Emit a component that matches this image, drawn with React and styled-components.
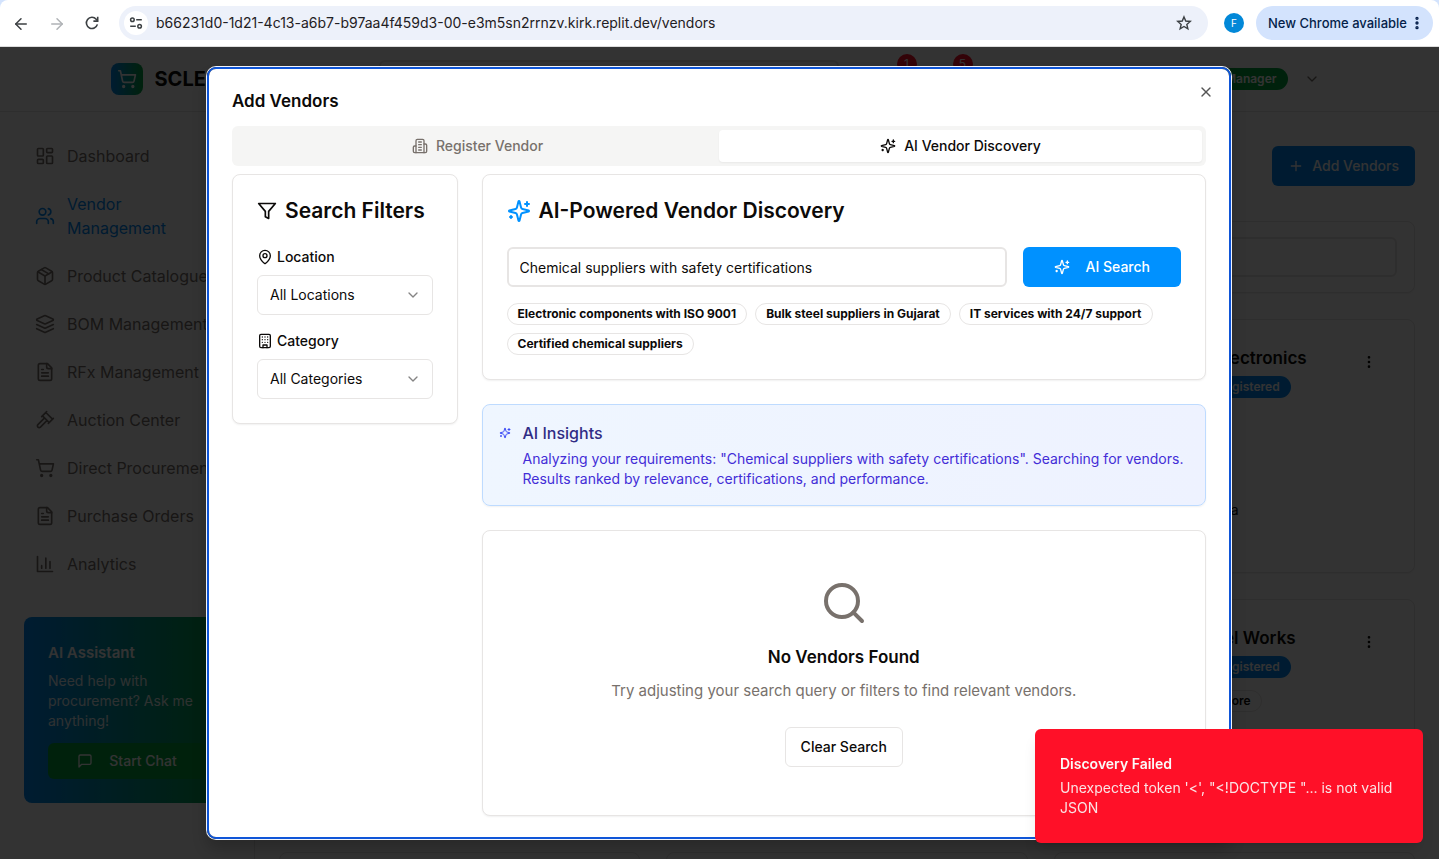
import React from "react";
import styled, { createGlobalStyle, css } from "styled-components";
import {
  ArrowLeft,
  ArrowRight,
  ChevronDown,
  EllipsisVertical,
  LayoutDashboard,
  MapPin,
  Package,
  Plus,
  Search,
  ShoppingCart,
  Users,
  X,
} from "lucide-react";

const GlobalStyle = createGlobalStyle`
  *, *::before, *::after { box-sizing: border-box; }
  body { margin: 0; font-family: Inter, "Liberation Sans", sans-serif; font-size: 16px; line-height: 24px; color: #0c0a09; background: #fff; }
  h1, h2, h3, p, ul { margin: 0; padding: 0; }
  ul { list-style: none; }
  button, input, select { font: inherit; color: inherit; margin: 0; }
  button { cursor: pointer; }
  svg { display: block; flex: none; }
`;

/* ---------- icons ---------- */

function Glyph({ size = 16, children }) {
  return (
    <svg
      width={size}
      height={size}
      viewBox="0 0 24 24"
      fill="none"
      stroke="currentColor"
      strokeWidth="2"
      strokeLinecap="round"
      strokeLinejoin="round"
      aria-hidden="true"
    >
      {children}
    </svg>
  );
}

const Sparkles = (props) => (
  <Glyph {...props}>
    <path d="M9.937 15.5A2 2 0 0 0 8.5 14.063l-6.135-1.582a.5.5 0 0 1 0-.962L8.5 9.936A2 2 0 0 0 9.937 8.5l1.582-6.135a.5.5 0 0 1 .963 0L14.063 8.5A2 2 0 0 0 15.5 9.937l6.135 1.581a.5.5 0 0 1 0 .964L15.5 14.063a2 2 0 0 0-1.437 1.437l-1.582 6.135a.5.5 0 0 1-.963 0z" />
    <path d="M20 3v4M22 5h-4M4 17v2M5 18H3" />
  </Glyph>
);

const Filter = (props) => (
  <Glyph {...props}>
    <polygon points="22 3 2 3 10 12.46 10 19 14 21 14 12.46 22 3" />
  </Glyph>
);

const Building = (props) => (
  <Glyph {...props}>
    <rect width="16" height="20" x="4" y="2" rx="2" />
    <path d="M9 22v-4h6v4M8 6h.01M16 6h.01M12 6h.01M12 10h.01M12 14h.01M16 10h.01M16 14h.01M8 10h.01M8 14h.01" />
  </Glyph>
);

const Buildings = (props) => (
  <Glyph {...props}>
    <path d="M6 22V4a2 2 0 0 1 2-2h8a2 2 0 0 1 2 2v18Z" />
    <path d="M6 12H4a2 2 0 0 0-2 2v6a2 2 0 0 0 2 2h2M18 9h2a2 2 0 0 1 2 2v9a2 2 0 0 1-2 2h-2" />
    <path d="M10 6h4M10 10h4M10 14h4M10 18h4" />
  </Glyph>
);

const BarChart = (props) => (
  <Glyph {...props}>
    <path d="M3 3v18h18M18 17V9M13 17V5M8 17v-3" />
  </Glyph>
);

const Gavel = (props) => (
  <Glyph {...props}>
    <path d="m14.5 12.5-8 8a2.119 2.119 0 1 1-3-3l8-8M16 16l6-6M8 8l6-6M9 7l8 8M21 11l-8-8" />
  </Glyph>
);

const Layers = (props) => (
  <Glyph {...props}>
    <path d="m12.83 2.18a2 2 0 0 0-1.66 0L2.6 6.08a1 1 0 0 0 0 1.83l8.58 3.91a2 2 0 0 0 1.66 0l8.58-3.9a1 1 0 0 0 0-1.83Z" />
    <path d="m22 17.65-9.17 4.16a2 2 0 0 1-1.66 0L2 17.65" />
    <path d="m22 12.65-9.17 4.16a2 2 0 0 1-1.66 0L2 12.65" />
  </Glyph>
);

const FileText = (props) => (
  <Glyph {...props}>
    <path d="M15 2H6a2 2 0 0 0-2 2v16a2 2 0 0 0 2 2h12a2 2 0 0 0 2-2V7Z" />
    <path d="M14 2v4a2 2 0 0 0 2 2h4M10 9H8M16 13H8M16 17H8" />
  </Glyph>
);

const Message = (props) => (
  <Glyph {...props}>
    <path d="M21 15a2 2 0 0 1-2 2H7l-4 4V5a2 2 0 0 1 2-2h14a2 2 0 0 1 2 2z" />
  </Glyph>
);

const Reload = () => (
  <svg width="16" height="16" viewBox="0 0 16 16" fill="none" stroke="currentColor" strokeWidth="1.6" aria-hidden="true">
    <path d="M13.4 9.4A5.6 5.6 0 1 1 12.2 4.2L13.6 5.8" />
    <path d="M13.7 1.8v4.3H9.4" />
  </svg>
);

const Tune = () => (
  <svg width="14" height="14" viewBox="0 0 14 14" fill="none" stroke="currentColor" strokeWidth="1.5" aria-hidden="true">
    <circle cx="3.4" cy="3.8" r="1.8" />
    <path d="M7.2 3.8h5.6M1.2 10.2h5.6" />
    <circle cx="10.6" cy="10.2" r="1.8" />
  </svg>
);

const Star = () => (
  <svg width="16" height="16" viewBox="0 0 16 16" fill="none" stroke="currentColor" strokeWidth="1.4" strokeLinejoin="miter" aria-hidden="true">
    <path d="M8 1.9l1.75 4.15 4.5.38-3.42 2.95 1.03 4.4L8 11.45l-3.86 2.33 1.03-4.4L1.75 6.43l4.5-.38z" />
  </svg>
);

/* ---------- browser bar ---------- */

const Screen = styled.div`
  display: flex;
  flex-direction: column;
  height: 100vh;
  background: #d3e3fd;
`;

const BrowserBar = styled.div`
  display: flex;
  align-items: center;
  flex: none;
  height: 47px;
  padding: 0 6px 0 12px;
  background: #fff;
  border-radius: 8px 8px 0 0;
  border-bottom: 1px solid #dcdcdc;
  color: #3c4043;
`;

const NavButtons = styled.div`
  display: flex;
  gap: 20px;
  margin-right: 19px;
`;

const BarButton = styled.button`
  display: grid;
  place-items: center;
  width: 16px;
  height: 16px;
  padding: 0;
  border: 0;
  background: none;
  color: ${(p) => (p.disabled ? "#b0b3b6" : "#3c4043")};
`;

const Omnibox = styled.div`
  display: flex;
  align-items: center;
  gap: 8px;
  flex: 1;
  height: 34px;
  padding: 0 16px 0 5px;
  border-radius: 17px;
  background: #edf1fa;
`;

const SiteInfo = styled(BarButton)`
  width: 24px;
  height: 24px;
  border-radius: 50%;
  background: #fff;
`;

const Address = styled.input`
  flex: 1;
  min-width: 0;
  padding: 0;
  border: 0;
  outline: 0;
  background: none;
  color: #1f2023;
  font-size: 14px;
  line-height: 20px;
`;

const Profile = styled.button`
  width: 20px;
  height: 20px;
  margin: 0 12px 0 16px;
  padding: 0;
  border: 0;
  border-radius: 50%;
  background: #0288d8;
  color: #fff;
  font-size: 10px;
  line-height: 20px;
`;

const UpdatePill = styled.button`
  display: flex;
  align-items: center;
  justify-content: space-between;
  width: 177px;
  height: 34px;
  padding: 0 8px 0 12px;
  border: 0;
  border-radius: 17px;
  background: #d3e3fd;
  color: #041e49;
  font-size: 13px;
  font-weight: 500;
  white-space: nowrap;
`;

/* ---------- page behind the dialog ---------- */

const Viewport = styled.div`
  position: relative;
  flex: 1;
  min-height: 0;
  overflow: hidden;
  background: #fff;
`;

const Header = styled.header`
  height: 65px;
  border-bottom: 1px solid #e7e5e4;
`;

const HeaderInner = styled.div`
  display: flex;
  align-items: center;
  max-width: 1280px;
  height: 64px;
  margin: 0 auto;
  padding: 0 32px 0 31px;
`;

const Brand = styled.div`
  display: flex;
  flex: none;
  align-items: center;
  gap: 12px;
  width: 268px;
  font-size: 20px;
  font-weight: 700;
`;

const BrandMark = styled.span`
  display: grid;
  place-items: center;
  width: 32px;
  height: 32px;
  border-radius: 8px;
  background: linear-gradient(90deg, #0089f5, #00a63e);
  color: #fff;
`;

const HeaderSearch = styled.input`
  flex: none;
  width: 460px;
  height: 38px;
  border: 2px solid #e7e5e4;
  border-radius: 6px;
`;

const HeaderActions = styled.div`
  display: flex;
  align-items: center;
  gap: 36px;
  margin: 0 auto 30px 58px;
`;

const Count = styled.span`
  width: 20px;
  height: 20px;
  border-radius: 50%;
  background: #ff1028;
  color: #fff;
  font-size: 12px;
  line-height: 20px;
  text-align: center;
`;

const Account = styled.button`
  display: flex;
  align-items: center;
  gap: 16px;
  padding: 0 8px;
  border: 0;
  background: none;
  color: #78716c;
`;

const Pill = styled.span`
  display: inline-block;
  padding: 2px 10px;
  border: 1px solid ${(p) => p.$border || "transparent"};
  border-radius: 11px;
  background: ${(p) => p.$bg || "transparent"};
  color: ${(p) => p.$color || "#fff"};
  font-size: 12px;
  font-weight: 600;
  line-height: 16px;
  white-space: nowrap;
`;

const Shell = styled.div`
  display: flex;
  align-items: stretch;
`;

const Sidebar = styled.aside`
  flex: none;
  width: 255px;
  min-height: 760px;
  padding: 20px 24px 24px;
  border-right: 1px solid #e7e5e4;
`;

const NavItem = styled.a`
  display: flex;
  align-items: center;
  gap: 12px;
  padding: 12px 11px;
  color: ${(p) => (p.$active ? "#0089f5" : "#78716c")};
  text-decoration: none;
`;

const NavLabel = styled.span`
  flex: 1;
  margin-right: -24px;
  ${(p) =>
    p.$wrap &&
    css`
      margin-right: 0;
    `}
`;

const Assistant = styled.section`
  display: flex;
  flex-direction: column;
  margin-top: 29px;
  padding: 24px;
  border-radius: 8px;
  background: linear-gradient(90deg, #0089f5, #00a63e);
  color: #fff;
`;

const AssistantTitle = styled.h3`
  margin-bottom: 6px;
  font-size: 15px;
  font-weight: 600;
`;

const AssistantText = styled.p`
  margin-bottom: 12px;
  font-size: 14px;
  line-height: 20px;
  opacity: 0.9;
`;

const Main = styled.main`
  flex: 1;
  min-width: 0;
  padding: 34px 24px 0;
`;

const Toolbar = styled.div`
  display: flex;
  justify-content: flex-end;
  margin-bottom: 35px;
`;

const Button = styled.button`
  display: inline-flex;
  align-items: center;
  justify-content: center;
  gap: ${(p) => (p.$wide ? 16 : 8)}px;
  height: ${(p) => (p.$small ? 36 : 40)}px;
  padding: 0 ${(p) => (p.$wide ? 30 : 15)}px;
  border: 1px solid ${(p) => p.$border || "transparent"};
  border-radius: 6px;
  background: ${(p) => p.$bg || "#fff"};
  background-clip: border-box;
  color: ${(p) => p.$color || "#fff"};
  font-size: 14px;
  font-weight: 500;
  line-height: 20px;
  white-space: nowrap;
`;

const Card = styled.section`
  border: 1px solid #e7e5e4;
  border-radius: 8px;
  background: #fff;
  box-shadow: 0 1px 2px rgba(0, 0, 0, 0.06);
`;

const SearchCard = styled(Card)`
  margin-bottom: 26px;
  padding: 15px 17px;
`;

const TextInput = styled.input`
  display: block;
  flex: 1;
  width: 100%;
  min-width: 0;
  height: 40px;
  padding: 0 11px;
  border: 2px solid #e7e5e4;
  border-radius: 6px;
  outline: 0;
  background: #fff;
  font-size: 14px;
  line-height: 20px;
`;

const VendorGrid = styled.div`
  display: grid;
  grid-template-columns: repeat(3, 1fr);
  grid-template-rows: 254px 227px 227px;
  gap: 26px;
`;

const VendorCard = styled(Card)`
  display: flex;
  justify-content: space-between;
  padding: 24px;
`;

const VendorFacts = styled.div`
  display: flex;
  flex-direction: column;
  align-items: flex-end;
  gap: 2px;
  width: 228px;
  font-size: 14px;
  white-space: nowrap;
`;

const Fact = styled.div`
  padding-right: ${(p) => p.$inset || 0}px;
  margin-top: ${(p) => p.$gap || 0}px;
`;

const VendorName = styled.h3`
  font-size: 17px;
  font-weight: 600;
  line-height: 28px;
`;

const MenuButton = styled.button`
  display: grid;
  place-items: center;
  width: 42px;
  height: 36px;
  padding: 0;
  border: 0;
  background: none;
`;

/* ---------- dialog ---------- */

const Overlay = styled.div`
  position: absolute;
  inset: 0;
  display: flex;
  align-items: center;
  justify-content: center;
  padding-right: 1px;
  background: rgba(0, 0, 0, 0.8);
`;

const Dialog = styled.div`
  position: relative;
  width: 100%;
  max-width: 1024px;
  max-height: 95%;
  padding: 23px;
  overflow-y: auto;
  scrollbar-width: none;
  border: 2px solid #0f55d7;
  border-radius: 9px;
  background: #fff;
  box-shadow: 0 0 0 1px #f2f5fb, 0 10px 15px rgba(0, 0, 0, 0.2);
`;

const DialogTitle = styled.h2`
  margin-bottom: 16px;
  font-size: 17px;
  font-weight: 600;
  line-height: 18px;
`;

const CloseButton = styled.button`
  position: absolute;
  top: 15px;
  right: 15px;
  padding: 0;
  border: 0;
  background: none;
  color: #555;
`;

const Tabs = styled.div`
  display: grid;
  grid-template-columns: 1fr 1fr;
  height: 40px;
  margin-bottom: 8px;
  padding: 4px;
  border-radius: 6px;
  background: #f5f5f4;
`;

const Tab = styled.button`
  display: flex;
  align-items: center;
  justify-content: center;
  gap: 8px;
  padding: 0;
  border: 0;
  border-radius: 4px;
  background: ${(p) => (p.$active ? "#fff" : "transparent")};
  box-shadow: ${(p) => (p.$active ? "0 1px 2px rgba(0, 0, 0, 0.05)" : "none")};
  color: ${(p) => (p.$active ? "#0c0a09" : "#78716c")};
  font-size: 14px;
  font-weight: 500;
  line-height: 20px;
`;

const Columns = styled.div`
  display: grid;
  grid-template-columns: repeat(4, 1fr);
  align-items: start;
  gap: 24px;
`;

const Results = styled.div`
  display: grid;
  grid-column: span 3;
  gap: 24px;
`;

const Panel = styled(Card)`
  padding: 24px;
`;

const PanelTitle = styled.h3`
  display: flex;
  align-items: center;
  gap: 8px;
  margin-bottom: 24px;
  font-size: 21px;
  font-weight: 600;
  line-height: 24px;
  white-space: nowrap;
`;

const Accent = styled.span`
  color: #0091ff;
`;

const Field = styled.div`
  display: grid;
  gap: 8px;

  & + & {
    margin-top: 16px;
  }
`;

const FieldLabel = styled.label`
  display: flex;
  align-items: center;
  gap: 4px;
  font-size: 14px;
  font-weight: 500;
  line-height: 20px;
`;

const SelectBox = styled.div`
  display: grid;
  align-items: center;

  & > * {
    grid-area: 1 / 1;
  }

  & > svg {
    justify-self: end;
    margin-right: 12px;
    color: #858484;
    pointer-events: none;
  }
`;

const Select = styled.select`
  appearance: none;
  width: 100%;
  height: 40px;
  padding: 0 36px 0 12px;
  border: 1px solid #e7e5e4;
  border-radius: 6px;
  background: #fff;
  font-size: 14px;
  line-height: 20px;
`;

const QueryRow = styled.div`
  display: flex;
  gap: 16px;
  margin-bottom: 16px;
`;

const Suggestions = styled.div`
  display: flex;
  flex-wrap: wrap;
  gap: 8px;
`;

const Suggestion = styled(Pill).attrs({ as: "button" })`
  font-weight: 700;
`;

const Insights = styled(Card)`
  display: flex;
  gap: 12px;
  padding: 16px;
  border-color: #bedbff;
  background: linear-gradient(90deg, #eff6ff, #eef2ff);
  color: #432dd7;
`;

const InsightsIcon = styled.span`
  padding-top: 6px;
  color: #3b4af6;
`;

const InsightsTitle = styled.h4`
  margin: 0 0 4px;
  color: #312c85;
  font-size: 16px;
  font-weight: 500;
`;

const InsightsText = styled.p`
  font-size: 14px;
  line-height: 20px;
`;

const Empty = styled(Card)`
  display: flex;
  flex-direction: column;
  align-items: center;
  padding: 48px;
  color: #78716c;
`;

const EmptyTitle = styled.h3`
  margin: 16px 0 8px;
  color: #0c0a09;
  font-size: 17px;
  font-weight: 600;
  line-height: 28px;
`;

const EmptyText = styled.p`
  margin-bottom: 24px;
  font-size: 15px;
`;

const Toast = styled.div`
  position: absolute;
  right: 16px;
  bottom: 16px;
  width: 388px;
  padding: 25px;
  border-radius: 6px;
  background: #ff1028;
  box-shadow: 0 10px 15px -3px rgba(0, 0, 0, 0.1), 0 4px 6px -4px rgba(0, 0, 0, 0.1);
  color: #fafaf9;
  font-size: 14px;
  line-height: 20px;
`;

const ToastTitle = styled.div`
  margin-bottom: 4px;
  font-weight: 600;
`;

const ToastText = styled.div`
  opacity: 0.9;
`;

/* ---------- data ---------- */

const NAV = [
  { label: "Dashboard", icon: LayoutDashboard },
  { label: "Vendor Management", icon: Users, active: true },
  { label: "Product Catalogue", icon: Package },
  { label: "BOM Management", icon: Layers },
  { label: "RFx Management", icon: FileText },
  { label: "Auction Center", icon: Gavel },
  { label: "Direct Procurement", icon: ShoppingCart },
  { label: "Purchase Orders", icon: FileText },
  { label: "Analytics", icon: BarChart },
];

const SUGGESTIONS = [
  "Electronic components with ISO 9001",
  "Bulk steel suppliers in Gujarat",
  "IT services with 24/7 support",
  "Certified chemical suppliers",
];

function FilterSelect({ id, label, icon, value }) {
  return (
    <Field>
      <FieldLabel htmlFor={id}>
        {icon}
        {label}
      </FieldLabel>
      <SelectBox>
        <Select id={id} defaultValue={value}>
          <option>{value}</option>
        </Select>
        <ChevronDown size={16} />
      </SelectBox>
    </Field>
  );
}

function Vendors() {
  return (
    <VendorGrid>
      <VendorCard />
      <VendorCard />
      <VendorCard>
        <VendorFacts>
          <VendorName>Electronics</VendorName>
          <Fact $inset={16}>
            <Pill $bg="#0089f5">Registered</Pill>
          </Fact>
          <Fact $inset={68} $gap={98}>India</Fact>
        </VendorFacts>
        <MenuButton aria-label="Vendor actions">
          <EllipsisVertical size={16} />
        </MenuButton>
      </VendorCard>
      <VendorCard />
      <VendorCard />
      <VendorCard>
        <VendorFacts>
          <Fact $inset={11}>
            <VendorName>Steel Works</VendorName>
          </Fact>
          <Fact $inset={16}>
            <Pill $bg="#0089f5">Registered</Pill>
          </Fact>
          <Fact $inset={45} $gap={8}>
            <Pill $border="#e7e5e4" $color="#0c0a09">+1 more</Pill>
          </Fact>
        </VendorFacts>
        <MenuButton aria-label="Vendor actions">
          <EllipsisVertical size={16} />
        </MenuButton>
      </VendorCard>
      <VendorCard />
      <VendorCard />
      <VendorCard />
    </VendorGrid>
  );
}

function VendorDialog() {
  return (
    <Dialog role="dialog" aria-labelledby="dialog-title">
      <DialogTitle id="dialog-title">Add Vendors</DialogTitle>
      <CloseButton aria-label="Close">
        <X size={16} />
      </CloseButton>
      <Tabs role="tablist">
        <Tab role="tab" aria-selected="false">
          <Buildings />
          Register Vendor
        </Tab>
        <Tab role="tab" aria-selected="true" $active>
          <Sparkles />
          AI Vendor Discovery
        </Tab>
      </Tabs>
      <Columns>
        <Panel>
          <PanelTitle>
            <Filter size={20} />
            Search Filters
          </PanelTitle>
          <FilterSelect id="location" label="Location" icon={<MapPin size={16} />} value="All Locations" />
          <FilterSelect id="category" label="Category" icon={<Building />} value="All Categories" />
        </Panel>
        <Results>
          <Panel>
            <PanelTitle>
              <Accent>
                <Sparkles size={24} />
              </Accent>
              AI-Powered Vendor Discovery
            </PanelTitle>
            <QueryRow>
              <TextInput aria-label="Vendor search" defaultValue="Chemical suppliers with safety certifications" />
              <Button $wide $bg="#0091ff">
                <Sparkles />
                AI Search
              </Button>
            </QueryRow>
            <Suggestions>
              {SUGGESTIONS.map((text) => (
                <Suggestion key={text} $border="#e7e5e4" $color="#0c0a09">
                  {text}
                </Suggestion>
              ))}
            </Suggestions>
          </Panel>
          <Insights>
            <InsightsIcon>
              <Sparkles size={12} />
            </InsightsIcon>
            <div>
              <InsightsTitle>AI Insights</InsightsTitle>
              <InsightsText>
                Analyzing your requirements: "Chemical suppliers with safety certifications". Searching for vendors.
                Results ranked by relevance, certifications, and performance.
              </InsightsText>
            </div>
          </Insights>
          <Empty>
            <Search size={48} />
            <EmptyTitle>No Vendors Found</EmptyTitle>
            <EmptyText>Try adjusting your search query or filters to find relevant vendors.</EmptyText>
            <Button $border="#e7e5e4" $color="#0c0a09">Clear Search</Button>
          </Empty>
        </Results>
      </Columns>
    </Dialog>
  );
}

export default function App() {
  return (
    <Screen>
      <GlobalStyle />
      <BrowserBar>
        <NavButtons>
          <BarButton aria-label="Back">
            <ArrowLeft size={18} />
          </BarButton>
          <BarButton aria-label="Forward" disabled>
            <ArrowRight size={18} />
          </BarButton>
          <BarButton aria-label="Reload">
            <Reload />
          </BarButton>
        </NavButtons>
        <Omnibox>
          <SiteInfo aria-label="Site information">
            <Tune />
          </SiteInfo>
          <Address
            aria-label="Address"
            defaultValue="b66231d0-1d21-4c13-a6b7-b97aa4f459d3-00-e3m5sn2rrnzv.kirk.replit.dev/vendors"
          />
          <BarButton aria-label="Bookmark">
            <Star />
          </BarButton>
        </Omnibox>
        <Profile>F</Profile>
        <UpdatePill>
          New Chrome available
          <EllipsisVertical size={16} strokeWidth={3} />
        </UpdatePill>
      </BrowserBar>

      <Viewport>
        <Header>
          <HeaderInner>
            <Brand>
              <BrandMark>
                <ShoppingCart size={20} />
              </BrandMark>
              SCLEN.AI
            </Brand>
            <HeaderSearch aria-label="Search" />
            <HeaderActions>
              <Count>1</Count>
              <Count>5</Count>
            </HeaderActions>
            <Account>
              <Pill $bg="#00a63e">Sourcing Manager</Pill>
              <ChevronDown size={16} />
            </Account>
          </HeaderInner>
        </Header>
        <Shell>
          <Sidebar>
            <nav>
              {NAV.map(({ label, icon: Icon, active }) => (
                <NavItem key={label} href="#" $active={active}>
                  <Icon size={20} />
                  <NavLabel $wrap={active}>{label}</NavLabel>
                </NavItem>
              ))}
            </nav>
            <Assistant>
              <AssistantTitle>AI Assistant</AssistantTitle>
              <AssistantText>Need help with procurement? Ask me anything!</AssistantText>
              <Button $small $wide $bg="#00a63e">
                <Message />
                Start Chat
              </Button>
            </Assistant>
          </Sidebar>
          <Main>
            <Toolbar>
              <Button $bg="#0089f5">
                <Plus size={16} />
                Add Vendors
              </Button>
            </Toolbar>
            <SearchCard>
              <TextInput aria-label="Search vendors" />
            </SearchCard>
            <Vendors />
          </Main>
        </Shell>
        <Overlay>
          <VendorDialog />
        </Overlay>
        <Toast role="alert">
          <ToastTitle>Discovery Failed</ToastTitle>
          <ToastText>Unexpected token '&lt;', "&lt;!DOCTYPE "... is not valid JSON</ToastText>
        </Toast>
      </Viewport>
    </Screen>
  );
}
